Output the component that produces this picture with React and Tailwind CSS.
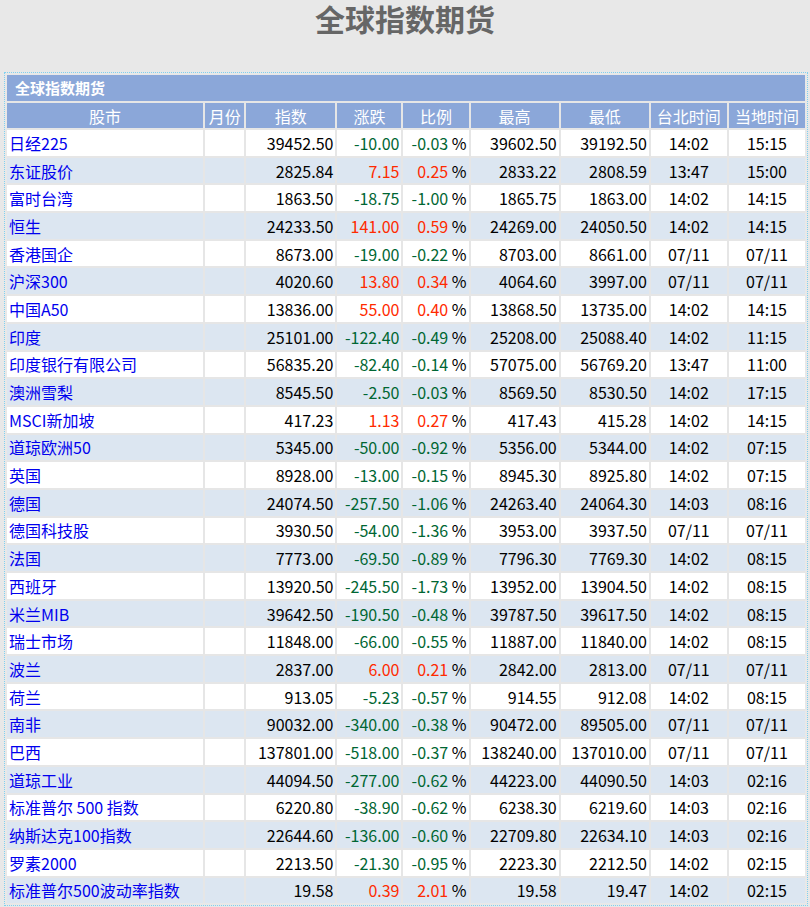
import React from "react";

const rows = [
["日经225","39452.50","-10.00","-0.03","39602.50","39192.50","14:02","15:15"],
["东证股价","2825.84","7.15","0.25","2833.22","2808.59","13:47","15:00"],
["富时台湾","1863.50","-18.75","-1.00","1865.75","1863.00","14:02","14:15"],
["恒生","24233.50","141.00","0.59","24269.00","24050.50","14:02","14:15"],
["香港国企","8673.00","-19.00","-0.22","8703.00","8661.00","07/11","07/11"],
["沪深300","4020.60","13.80","0.34","4064.60","3997.00","07/11","07/11"],
["中国A50","13836.00","55.00","0.40","13868.50","13735.00","14:02","14:15"],
["印度","25101.00","-122.40","-0.49","25208.00","25088.40","14:02","11:15"],
["印度银行有限公司","56835.20","-82.40","-0.14","57075.00","56769.20","13:47","11:00"],
["澳洲雪梨","8545.50","-2.50","-0.03","8569.50","8530.50","14:02","17:15"],
["MSCI新加坡","417.23","1.13","0.27","417.43","415.28","14:02","14:15"],
["道琼欧洲50","5345.00","-50.00","-0.92","5356.00","5344.00","14:02","07:15"],
["英国","8928.00","-13.00","-0.15","8945.30","8925.80","14:02","07:15"],
["德国","24074.50","-257.50","-1.06","24263.40","24064.30","14:03","08:16"],
["德国科技股","3930.50","-54.00","-1.36","3953.00","3937.50","07/11","07/11"],
["法国","7773.00","-69.50","-0.89","7796.30","7769.30","14:02","08:15"],
["西班牙","13920.50","-245.50","-1.73","13952.00","13904.50","14:02","08:15"],
["米兰MIB","39642.50","-190.50","-0.48","39787.50","39617.50","14:02","08:15"],
["瑞士市场","11848.00","-66.00","-0.55","11887.00","11840.00","14:02","08:15"],
["波兰","2837.00","6.00","0.21","2842.00","2813.00","07/11","07/11"],
["荷兰","913.05","-5.23","-0.57","914.55","912.08","14:02","08:15"],
["南非","90032.00","-340.00","-0.38","90472.00","89505.00","07/11","07/11"],
["巴西","137801.00","-518.00","-0.37","138240.00","137010.00","07/11","07/11"],
["道琼工业","44094.50","-277.00","-0.62","44223.00","44090.50","14:03","02:16"],
["标准普尔 500 指数","6220.80","-38.90","-0.62","6238.30","6219.60","14:03","02:16"],
["纳斯达克100指数","22644.60","-136.00","-0.60","22709.80","22634.10","14:03","02:16"],
["罗素2000","2213.50","-21.30","-0.95","2223.30","2212.50","14:02","02:15"],
["标准普尔500波动率指数","19.58","0.39","2.01","19.58","19.47","14:02","02:15"],
];

const heads = ["股市","月份","指数","涨跌","比例","最高","最低","台北时间","当地时间"];
const widths = [196,41,91,66,67,90,90,78,78];

export default function App() {
  return (
    <div className="w-[810px] h-[907px] bg-[#e8e8e8] overflow-hidden" style={{fontFamily:'"Noto Sans CJK SC","Noto Sans",sans-serif'}}>
      <h1 className="text-[30px] font-bold text-[#666] text-center leading-[36px] pt-[0px] h-[72px]">全球指数期货</h1>
      <div className="ml-[4px] w-[804px] border border-dotted border-[#7fd0f0] p-[2px]">
        <table className="w-full border-separate border-spacing-0 text-[16px] leading-[18px] bg-[#e6e6e6] table-fixed">
          <colgroup>
            {widths.map((w,i)=>(<col key={i} style={{width:w}} />))}
          </colgroup>
          <thead>
            <tr><th colSpan={9} className="bg-[#8ba7d9] text-white text-left font-bold pl-[8px] h-[26px] text-[15px]">全球指数期货</th></tr>
            <tr>
              {heads.map((h,i)=>(
                <th key={h} className={`bg-[#8ba7d9] text-white font-normal h-[27px] border-t-2 border-[#e6e6e6] whitespace-nowrap ${i>0?"border-l-2":""}`}>{h}</th>
              ))}
            </tr>
          </thead>
          <tbody>
            {rows.map((r,i)=>{
              const bg = i%2 ? "bg-[#dce6f1]" : "bg-white";
              const up = !r[2].startsWith("-");
              const c = up ? "text-[#ff2a00]" : "text-[#006633]";
              const td = `${bg} border-t-2 border-l-2 border-[#e6e6e6] h-[27.7px] text-black whitespace-nowrap`;
              return (
                <tr key={i}>
                  <td className={`${bg} border-t-2 border-[#e6e6e6] text-[#0000ee] pl-[2px] whitespace-nowrap`}>{r[0]}</td>
                  <td className={td}></td>
                  <td className={`${td} text-right pr-[2px]`}>{r[1]}</td>
                  <td className={`${td} text-right pr-[2px]`}><span className={c}>{r[2]}</span></td>
                  <td className={`${td} text-right pr-[2px]`}><span className={c}>{r[3]}</span> %</td>
                  <td className={`${td} text-right pr-[2px]`}>{r[4]}</td>
                  <td className={`${td} text-right pr-[2px]`}>{r[5]}</td>
                  <td className={`${td} text-center`}>{r[6]}</td>
                  <td className={`${td} text-center`}>{r[7]}</td>
                </tr>
              );
            })}
          </tbody>
        </table>
      </div>
    </div>
  );
}
